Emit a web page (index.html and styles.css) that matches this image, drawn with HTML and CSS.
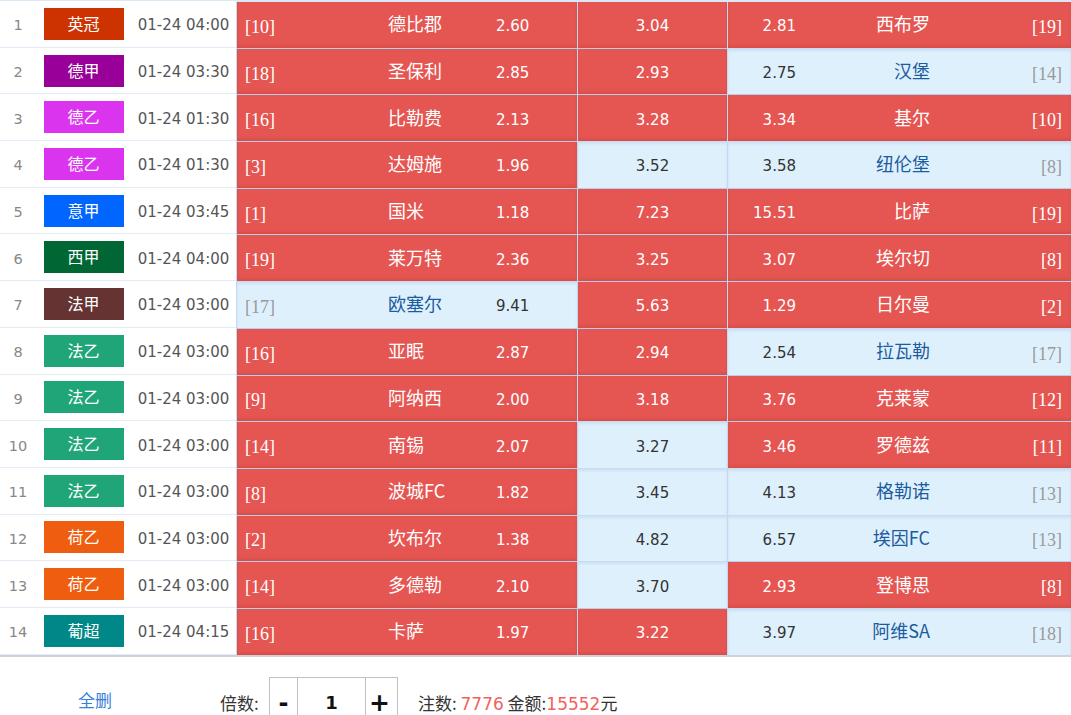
FILE: index.html
```html
<!DOCTYPE html>
<html lang="zh-CN">
<head>
<meta charset="utf-8">
<title>投注单</title>
<link rel="stylesheet" href="styles.css">
</head>
<body>
<div class="table">
  <div class="row">
    <div class="c-idx">1</div>
    <div class="c-lg"><span class="badge lg-yg">英冠</span></div>
    <div class="c-time">01-24 04:00</div>
    <div class="cell home sel"><span class="rank">[10]</span><span class="name">德比郡</span><span class="odds">2.60</span></div>
    <div class="cell draw sel"><span class="odds">3.04</span></div>
    <div class="cell away sel"><span class="odds">2.81</span><span class="name">西布罗</span><span class="rank">[19]</span></div>
  </div>
  <div class="row">
    <div class="c-idx">2</div>
    <div class="c-lg"><span class="badge lg-dj">德甲</span></div>
    <div class="c-time">01-24 03:30</div>
    <div class="cell home sel"><span class="rank">[18]</span><span class="name">圣保利</span><span class="odds">2.85</span></div>
    <div class="cell draw sel"><span class="odds">2.93</span></div>
    <div class="cell away"><span class="odds">2.75</span><span class="name">汉堡</span><span class="rank">[14]</span></div>
  </div>
  <div class="row">
    <div class="c-idx">3</div>
    <div class="c-lg"><span class="badge lg-dy">德乙</span></div>
    <div class="c-time">01-24 01:30</div>
    <div class="cell home sel"><span class="rank">[16]</span><span class="name">比勒费</span><span class="odds">2.13</span></div>
    <div class="cell draw sel"><span class="odds">3.28</span></div>
    <div class="cell away sel"><span class="odds">3.34</span><span class="name">基尔</span><span class="rank">[10]</span></div>
  </div>
  <div class="row">
    <div class="c-idx">4</div>
    <div class="c-lg"><span class="badge lg-dy">德乙</span></div>
    <div class="c-time">01-24 01:30</div>
    <div class="cell home sel"><span class="rank">[3]</span><span class="name">达姆施</span><span class="odds">1.96</span></div>
    <div class="cell draw"><span class="odds">3.52</span></div>
    <div class="cell away"><span class="odds">3.58</span><span class="name">纽伦堡</span><span class="rank">[8]</span></div>
  </div>
  <div class="row">
    <div class="c-idx">5</div>
    <div class="c-lg"><span class="badge lg-yj">意甲</span></div>
    <div class="c-time">01-24 03:45</div>
    <div class="cell home sel"><span class="rank">[1]</span><span class="name">国米</span><span class="odds">1.18</span></div>
    <div class="cell draw sel"><span class="odds">7.23</span></div>
    <div class="cell away sel"><span class="odds">15.51</span><span class="name">比萨</span><span class="rank">[19]</span></div>
  </div>
  <div class="row">
    <div class="c-idx">6</div>
    <div class="c-lg"><span class="badge lg-xj">西甲</span></div>
    <div class="c-time">01-24 04:00</div>
    <div class="cell home sel"><span class="rank">[19]</span><span class="name">莱万特</span><span class="odds">2.36</span></div>
    <div class="cell draw sel"><span class="odds">3.25</span></div>
    <div class="cell away sel"><span class="odds">3.07</span><span class="name">埃尔切</span><span class="rank">[8]</span></div>
  </div>
  <div class="row">
    <div class="c-idx">7</div>
    <div class="c-lg"><span class="badge lg-fj">法甲</span></div>
    <div class="c-time">01-24 03:00</div>
    <div class="cell home"><span class="rank">[17]</span><span class="name">欧塞尔</span><span class="odds">9.41</span></div>
    <div class="cell draw sel"><span class="odds">5.63</span></div>
    <div class="cell away sel"><span class="odds">1.29</span><span class="name">日尔曼</span><span class="rank">[2]</span></div>
  </div>
  <div class="row">
    <div class="c-idx">8</div>
    <div class="c-lg"><span class="badge lg-fy">法乙</span></div>
    <div class="c-time">01-24 03:00</div>
    <div class="cell home sel"><span class="rank">[16]</span><span class="name">亚眠</span><span class="odds">2.87</span></div>
    <div class="cell draw sel"><span class="odds">2.94</span></div>
    <div class="cell away"><span class="odds">2.54</span><span class="name">拉瓦勒</span><span class="rank">[17]</span></div>
  </div>
  <div class="row">
    <div class="c-idx">9</div>
    <div class="c-lg"><span class="badge lg-fy">法乙</span></div>
    <div class="c-time">01-24 03:00</div>
    <div class="cell home sel"><span class="rank">[9]</span><span class="name">阿纳西</span><span class="odds">2.00</span></div>
    <div class="cell draw sel"><span class="odds">3.18</span></div>
    <div class="cell away sel"><span class="odds">3.76</span><span class="name">克莱蒙</span><span class="rank">[12]</span></div>
  </div>
  <div class="row">
    <div class="c-idx">10</div>
    <div class="c-lg"><span class="badge lg-fy">法乙</span></div>
    <div class="c-time">01-24 03:00</div>
    <div class="cell home sel"><span class="rank">[14]</span><span class="name">南锡</span><span class="odds">2.07</span></div>
    <div class="cell draw"><span class="odds">3.27</span></div>
    <div class="cell away sel"><span class="odds">3.46</span><span class="name">罗德兹</span><span class="rank">[11]</span></div>
  </div>
  <div class="row">
    <div class="c-idx">11</div>
    <div class="c-lg"><span class="badge lg-fy">法乙</span></div>
    <div class="c-time">01-24 03:00</div>
    <div class="cell home sel"><span class="rank">[8]</span><span class="name">波城FC</span><span class="odds">1.82</span></div>
    <div class="cell draw"><span class="odds">3.45</span></div>
    <div class="cell away"><span class="odds">4.13</span><span class="name">格勒诺</span><span class="rank">[13]</span></div>
  </div>
  <div class="row">
    <div class="c-idx">12</div>
    <div class="c-lg"><span class="badge lg-hy">荷乙</span></div>
    <div class="c-time">01-24 03:00</div>
    <div class="cell home sel"><span class="rank">[2]</span><span class="name">坎布尔</span><span class="odds">1.38</span></div>
    <div class="cell draw"><span class="odds">4.82</span></div>
    <div class="cell away"><span class="odds">6.57</span><span class="name">埃因FC</span><span class="rank">[13]</span></div>
  </div>
  <div class="row">
    <div class="c-idx">13</div>
    <div class="c-lg"><span class="badge lg-hy">荷乙</span></div>
    <div class="c-time">01-24 03:00</div>
    <div class="cell home sel"><span class="rank">[14]</span><span class="name">多德勒</span><span class="odds">2.10</span></div>
    <div class="cell draw"><span class="odds">3.70</span></div>
    <div class="cell away sel"><span class="odds">2.93</span><span class="name">登博思</span><span class="rank">[8]</span></div>
  </div>
  <div class="row">
    <div class="c-idx">14</div>
    <div class="c-lg"><span class="badge lg-pc">葡超</span></div>
    <div class="c-time">01-24 04:15</div>
    <div class="cell home sel"><span class="rank">[16]</span><span class="name">卡萨</span><span class="odds">1.97</span></div>
    <div class="cell draw sel"><span class="odds">3.22</span></div>
    <div class="cell away"><span class="odds">3.97</span><span class="name">阿维SA</span><span class="rank">[18]</span></div>
  </div>
</div>
<div class="bar">
  <a class="del">全删</a>
  <span class="label">倍数:</span>
  <div class="stepper">
    <span class="btn minus">-</span>
    <span class="val">1</span>
    <span class="btn plus">+</span>
  </div>
  <span class="summary">注数: <em>7776</em> 金额:<em>15552</em>元</span>
</div>
</body>
</html>
```

FILE: styles.css
```css
body {
  margin: 0;
  background: #fff;
  font-family: "DejaVu Sans", "Noto Sans CJK SC", sans-serif;
  color: #333;
  overflow: hidden;
}

.table {
  border-top: 1px solid #dde8f5;
  border-bottom: 2px solid #cfd2dc;
}

.row {
  display: flex;
  height: 46.7px;
  box-sizing: border-box;
}

.c-idx,
.c-lg,
.c-time {
  display: flex;
  align-items: center;
  justify-content: center;
  border-bottom: 1px solid #e2ebf7;
  box-sizing: border-box;
}

.c-idx {
  width: 36px;
  padding-top: 3px;
  font-size: 14.5px;
  color: #888;
}

.c-lg {
  width: 95px;
}

.badge {
  display: block;
  width: 80px;
  height: 32px;
  line-height: 30px;
  text-align: center;
  color: #fff;
  font-family: "Noto Sans CJK SC", sans-serif;
  font-size: 16px;
}

.lg-yg { background: #cc3300; }
.lg-dj { background: #990099; }
.lg-dy { background: #db34ee; }
.lg-yj { background: #0066ff; }
.lg-xj { background: #006633; }
.lg-fj { background: #663333; }
.lg-fy { background: #1fa577; }
.lg-hy { background: #ef5e10; }
.lg-pc { background: #008888; }

.c-time {
  width: 105px;
  padding-top: 3px;
  font-size: 15px;
  color: #555;
}

.cell {
  display: flex;
  align-items: center;
  box-sizing: border-box;
  padding-top: 3px;
  background: #dff0fd;
  border-left: 1px solid #c4d9ef;
  border-top: 1px solid #c8dcf1;
  box-shadow: inset 0 2px 3px rgba(150, 180, 215, 0.25);
  font-size: 15px;
  color: #333;
}

.cell.sel {
  background: #e55652;
  border-top: 1px solid #b5cfec;
  box-shadow: inset 0 -2px 3px rgba(120, 20, 20, 0.12);
  color: #fff;
}

.row:first-child .cell {
  border-top-color: #dde8f5;
}

.home {
  width: 341px;
  padding-left: 8px;
}

.draw {
  width: 150px;
  justify-content: center;
}

.away {
  width: 344px;
  padding-right: 9px;
}

.odds {
  line-height: 20px;
}

.rank {
  font-family: "Liberation Serif", serif;
  font-size: 18px;
  line-height: 22px;
  padding-top: 1px;
  color: #999;
}

.name {
  font-family: "Noto Sans CJK SC", sans-serif;
  font-size: 18px;
  line-height: 24px;
  padding-bottom: 6px;
  color: #1b5c9e;
}

.sel .rank,
.sel .name {
  color: #fff;
}

.home .rank {
  width: 143px;
}

.home .name {
  width: 108px;
}

.away .odds {
  width: 68px;
  text-align: right;
}

.away .name {
  width: 134px;
  text-align: right;
}

.away .rank {
  flex: 1;
  text-align: right;
}

.bar {
  display: flex;
  align-items: center;
  padding-top: 20px;
  font-family: "Noto Sans CJK SC", sans-serif;
  font-size: 17px;
  color: #333;
}

.del {
  width: 190px;
  text-align: center;
  color: #3a80d8;
  margin-bottom: 6px;
}

.label {
  margin-left: 30px;
  width: 49px;
}

.stepper {
  display: flex;
  height: 52px;
  border: 1px solid #c0c0c0;
  box-sizing: border-box;
}

.btn,
.val {
  display: flex;
  align-items: center;
  justify-content: center;
  color: #111;
  font-family: "DejaVu Sans", sans-serif;
  font-weight: bold;
  line-height: 20px;
}

.minus {
  width: 27px;
  font-size: 24px;
  border-right: 1px solid #c0c0c0;
}

.val {
  width: 67px;
  font-size: 18px;
  border-right: 1px solid #c0c0c0;
}

.plus {
  width: 31px;
  padding-right: 4px;
  box-sizing: border-box;
  font-size: 25px;
}

.summary {
  margin-left: 20px;
}

.summary em {
  font-style: normal;
  font-family: "DejaVu Sans", sans-serif;
  color: #f0625f;
}
```
